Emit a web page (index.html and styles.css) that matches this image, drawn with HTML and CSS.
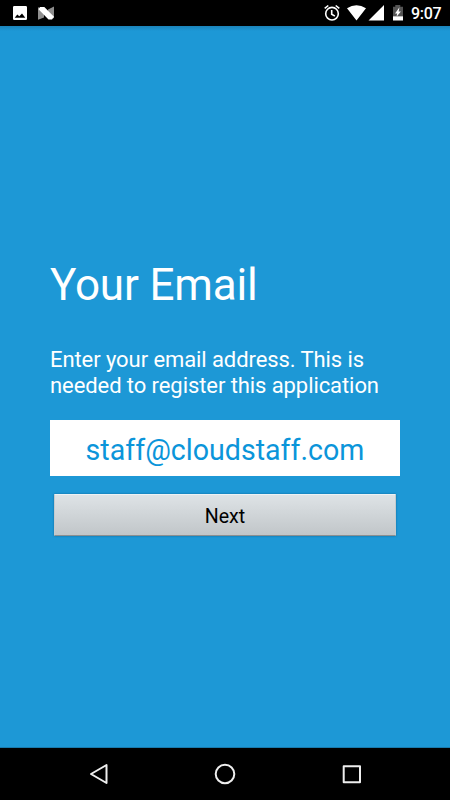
FILE: index.html
```html
<!DOCTYPE html>
<html lang="en">
<head>
<meta charset="utf-8">
<title>Your Email</title>
<link rel="stylesheet" href="styles.css">
</head>
<body>
<div class="screen">
  <header class="status">
    <svg class="notifications" width="60" height="26" viewBox="0 0 60 26">
      <path fill="#fff" fill-rule="evenodd" d="M14.300 6h11.400a1.300 1.300 0 0 1 1.300 1.300v11.400a1.300 1.300 0 0 1-1.300 1.300h-11.400a1.300 1.300 0 0 1-1.300-1.300v-11.400A1.300 1.300 0 0 1 14.300 6zM14.700 17.700h10.600l-3.300-4.300-2.700 2.900-2-1.700z"/>
      <path fill="#8e8e8e" d="M38 7l6 5v5.500L38 19.700zM54 6.500v12L48 14V9.500z"/>
      <path fill="#fff" d="M38.500 9.200L40 7h4.300L54 16.800 52 19.600h-3.500z"/>
    </svg>
    <div class="system">
      <svg width="84" height="26" viewBox="322 0 84 26">
        <g fill="none" stroke="#fff" stroke-width="1.600">
          <circle cx="332" cy="13.700" r="6.300"/>
          <path d="M331.700 10v4.200l3.200 1.900M324.700 8.400l3.600-2.900M339.300 8.400l-3.600-2.900"/>
        </g>
        <path fill="#fff" d="M347 8.300q9.500-6.200 19 0L356.500 20.400zM384 5v15.500h-15.500z"/>
        <path fill="#555" d="M393 6.700h2.300V5h5v1.700h2.700V16h-10z"/>
        <path fill="#fff" d="M393 16.300h10v4.200h-10zM399.500 7.300l-4.500 6.300h2.200l-.7 3.100 4.400-5.300h-2.300z"/>
      </svg>
      <span class="time">9:07</span>
    </div>
  </header>
  <main class="content">
    <h1>Your Email</h1>
    <p>Enter your email address. This is<br>needed to register this application</p>
    <input class="email" type="text" aria-label="Email" value="staff@cloudstaff.com">
    <button class="next" type="button">Next</button>
  </main>
  <nav class="navbar">
    <svg width="450" height="52" viewBox="0 748 450 52" fill="none" stroke="#eee" stroke-width="2" stroke-linejoin="round">
      <path d="M106.500 765v18L91 774z"/>
      <circle cx="225" cy="774" r="9.300"/>
      <path d="M343.700 766.200h16.300v16.100h-16.300z"/>
    </svg>
  </nav>
</div>
</body>
</html>
```

FILE: styles.css
```css
* {
  box-sizing: border-box;
}

body {
  margin: 0;
  font-family: Roboto, sans-serif;
}

.screen {
  display: flex;
  flex-direction: column;
  width: 450px;
  height: 800px;
  overflow: hidden;
  background: #1d98d6;
}

.status {
  display: flex;
  justify-content: space-between;
  height: 26px;
  background: #000;
}

.status svg,
.navbar svg {
  display: block;
}

.system {
  display: flex;
  width: 128px;
}

.time {
  padding-left: 5px;
  color: #fff;
  font-size: 16px;
  font-weight: 500;
  letter-spacing: -.3px;
  line-height: 28px;
}

.content {
  display: flex;
  flex: 1;
  flex-direction: column;
  padding: 233px 50px 0;
  background: linear-gradient(#1a83ba, #1d98d6 5px);
  border-bottom: 1px solid #187aad;
}

h1 {
  margin: 0;
  color: #fff;
  font-size: 44px;
  font-weight: 400;
  letter-spacing: -.15px;
  line-height: 52px;
}

p {
  margin: 36px 0 0;
  color: #fff;
  font-size: 22px;
  letter-spacing: -.08px;
  line-height: 26px;
  white-space: nowrap;
}

.email {
  width: 350px;
  height: 56px;
  margin: 21px 0 0;
  padding: 3px 0 0;
  border: 0;
  border-radius: 0;
  background: #fff;
  color: #0b95da;
  font: 28.6px Roboto, sans-serif;
  text-align: center;
}

.next {
  width: 342px;
  height: 42px;
  margin: 18px 4px 0;
  padding: 2px 0 0;
  border: 1px solid #c4cbce;
  border-top-color: #edf2f4;
  border-bottom-color: #8b8f90;
  border-radius: 1px;
  background: linear-gradient(#dee3e6, #c1c6c9);
  box-shadow: 0 0 2px rgba(0, 55, 90, .55);
  color: #000;
  font: 19.6px Roboto, sans-serif;
}

.navbar {
  height: 52px;
  background: #000;
}
```
